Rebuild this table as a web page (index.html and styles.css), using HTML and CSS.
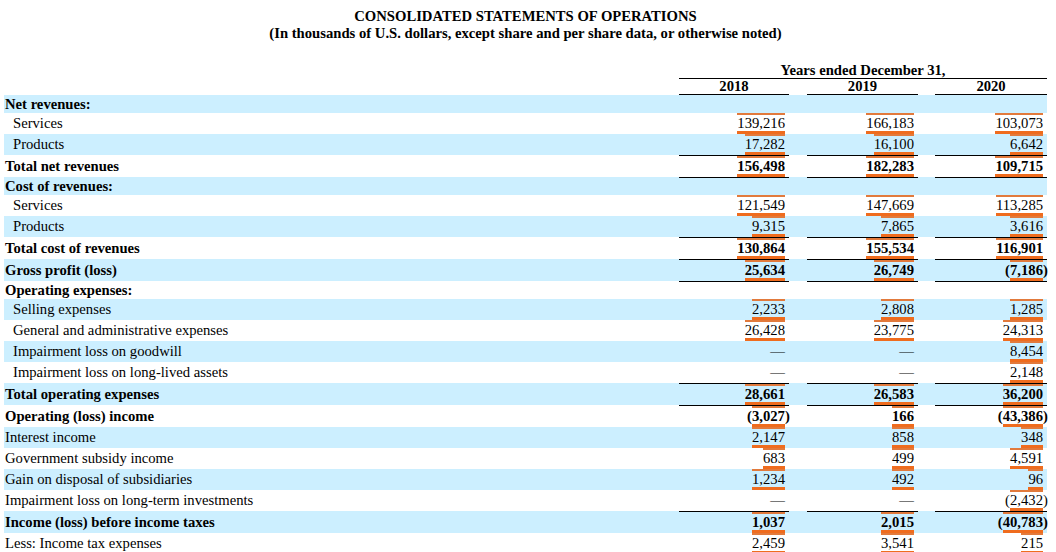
FILE: index.html
```html
<!DOCTYPE html>
<html>
<head>
<meta charset="utf-8">
<link rel="stylesheet" href="styles.css">
</head>
<body>
<div class="title">
  <div>CONSOLIDATED STATEMENTS OF OPERATIONS</div>
  <div>(In thousands of U.S. dollars, except share and per share data, or otherwise noted)</div>
</div>
<table class="fin">
  <colgroup>
    <col class="c-label"><col class="c-v1"><col class="c-g1"><col class="c-v2"><col class="c-g2"><col class="c-v3">
  </colgroup>
  <thead>
    <tr class="h1"><th></th><th colspan="5" class="yrs">Years ended December 31,</th></tr>
    <tr class="h2"><th></th><th class="yr">2018</th><th></th><th class="yr">2019</th><th></th><th class="yr">2020</th></tr>
  </thead>
  <tbody>
    <tr class="b bold sec"><td class="l">Net revenues:</td><td class="v"></td><td></td><td class="v"></td><td></td><td class="v"></td></tr>
    <tr><td class="l ind">Services</td><td class="v"><span class="n">139,216</span></td><td></td><td class="v"><span class="n">166,183</span></td><td></td><td class="v"><span class="n">103,073</span></td></tr>
    <tr class="b"><td class="l ind">Products</td><td class="v"><span class="n">17,282</span></td><td></td><td class="v"><span class="n">16,100</span></td><td></td><td class="v"><span class="n">6,642</span></td></tr>
    <tr class="bold top"><td class="l">Total net revenues</td><td class="v"><span class="n">156,498</span></td><td></td><td class="v"><span class="n">182,283</span></td><td></td><td class="v"><span class="n">109,715</span></td></tr>
    <tr class="b bold sec top"><td class="l">Cost of revenues:</td><td class="v"></td><td></td><td class="v"></td><td></td><td class="v"></td></tr>
    <tr><td class="l ind">Services</td><td class="v"><span class="n">121,549</span></td><td></td><td class="v"><span class="n">147,669</span></td><td></td><td class="v"><span class="n">113,285</span></td></tr>
    <tr class="b"><td class="l ind">Products</td><td class="v"><span class="n">9,315</span></td><td></td><td class="v"><span class="n">7,865</span></td><td></td><td class="v"><span class="n">3,616</span></td></tr>
    <tr class="bold top"><td class="l">Total cost of revenues</td><td class="v"><span class="n">130,864</span></td><td></td><td class="v"><span class="n">155,534</span></td><td></td><td class="v"><span class="n">116,901</span></td></tr>
    <tr class="b bold top"><td class="l">Gross profit (loss)</td><td class="v"><span class="n">25,634</span></td><td></td><td class="v"><span class="n">26,749</span></td><td></td><td class="v">(<span class="n">7,186</span><span class="rp">)</span></td></tr>
    <tr class="bold sec top"><td class="l">Operating expenses:</td><td class="v"></td><td></td><td class="v"></td><td></td><td class="v"></td></tr>
    <tr class="b"><td class="l ind">Selling expenses</td><td class="v"><span class="n">2,233</span></td><td></td><td class="v"><span class="n">2,808</span></td><td></td><td class="v"><span class="n">1,285</span></td></tr>
    <tr><td class="l ind">General and administrative expenses</td><td class="v"><span class="n">26,428</span></td><td></td><td class="v"><span class="n">23,775</span></td><td></td><td class="v"><span class="n">24,313</span></td></tr>
    <tr class="b"><td class="l ind">Impairment loss on goodwill</td><td class="v">—</td><td></td><td class="v">—</td><td></td><td class="v"><span class="n">8,454</span></td></tr>
    <tr><td class="l ind">Impairment loss on long-lived assets</td><td class="v">—</td><td></td><td class="v">—</td><td></td><td class="v"><span class="n">2,148</span></td></tr>
    <tr class="b bold top"><td class="l">Total operating expenses</td><td class="v"><span class="n">28,661</span></td><td></td><td class="v"><span class="n">26,583</span></td><td></td><td class="v"><span class="n">36,200</span></td></tr>
    <tr class="bold top"><td class="l">Operating (loss) income</td><td class="v">(<span class="n">3,027</span><span class="rp">)</span></td><td></td><td class="v"><span class="n">166</span></td><td></td><td class="v">(<span class="n">43,386</span><span class="rp">)</span></td></tr>
    <tr class="b"><td class="l">Interest income</td><td class="v"><span class="n">2,147</span></td><td></td><td class="v"><span class="n">858</span></td><td></td><td class="v"><span class="n">348</span></td></tr>
    <tr><td class="l">Government subsidy income</td><td class="v"><span class="n">683</span></td><td></td><td class="v"><span class="n">499</span></td><td></td><td class="v"><span class="n">4,591</span></td></tr>
    <tr class="b"><td class="l">Gain on disposal of subsidiaries</td><td class="v"><span class="n">1,234</span></td><td></td><td class="v"><span class="n">492</span></td><td></td><td class="v"><span class="n">96</span></td></tr>
    <tr><td class="l">Impairment loss on long-term investments</td><td class="v">—</td><td></td><td class="v">—</td><td></td><td class="v">(<span class="n">2,432</span><span class="rp">)</span></td></tr>
    <tr class="b bold top"><td class="l">Income (loss) before income taxes</td><td class="v"><span class="n">1,037</span></td><td></td><td class="v"><span class="n">2,015</span></td><td></td><td class="v">(<span class="n">40,783</span><span class="rp">)</span></td></tr>
    <tr><td class="l">Less: Income tax expenses</td><td class="v"><span class="n">2,459</span></td><td></td><td class="v"><span class="n">3,541</span></td><td></td><td class="v"><span class="n">215</span></td></tr>
  </tbody>
</table>
</body>
</html>
```
FILE: styles.css
```css
html, body {
  margin: 0;
  padding: 0;
  background: #ffffff;
}
body {
  padding: 8px 9px 0 4px;
  font-family: "Liberation Serif", "Times New Roman", serif;
  font-size: 14.67px;
  color: #000000;
  overflow: hidden;
}
.title {
  text-align: center;
  font-weight: bold;
  line-height: 17px;
}
.fin {
  margin-top: 21px;
  width: 1043px;
  table-layout: fixed;
  border-collapse: separate;
  border-spacing: 0;
}
.c-label { width: 675px; }
.c-v1 { width: 110px; }
.c-g1 { width: 18px; }
.c-v2 { width: 111px; }
.c-g2 { width: 17px; }
.c-v3 { width: 112px; }

.fin th, .fin td {
  padding: 0;
  vertical-align: middle;
  white-space: nowrap;
}
.fin th {
  font-weight: bold;
  line-height: 15px;
}
.h1 .yrs {
  text-align: center;
  border-bottom: 1px solid #000000;
}
.h2 .yr {
  text-align: center;
  border-bottom: 1px solid #000000;
}
.fin td {
  line-height: 17px;
}
.fin tr.sec td {
  line-height: 18px;
}
.fin tr.b td {
  background: #ccefff;
}
.fin td.l {
  padding-left: 1px;
}
.fin td.ind {
  padding-left: 9px;
}
.fin tr.bold td {
  font-weight: bold;
}
.fin tr.top td.v {
  border-top: 1px solid #000000;
}
.fin td.v {
  text-align: right;
  padding-right: 4px;
}
.fin td.v:first-of-type {
  padding-right: 3px;
}
.n {
  display: inline-block;
  line-height: 16px;
  border-top: 2px solid #e27a3c;
  border-bottom: 3px solid #ef6c1e;
}
.rp {
  margin-right: -4.8px;
}
```
